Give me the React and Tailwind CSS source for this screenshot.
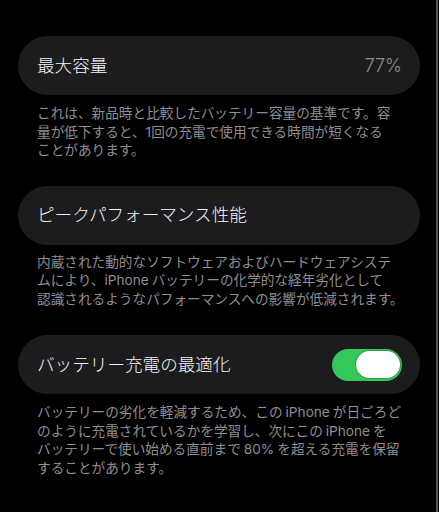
import React, { useState } from "react";

const font = { fontFamily: 'Inter, "Noto Sans CJK JP", sans-serif' };

const Row = ({ title, right }) => (
  <div className="h-[59px] rounded-full bg-[#1c1c1e] flex items-center justify-between pl-[19px] pr-[18px]">
    <span className="text-[17.6px] font-light text-[#f4f4f4] leading-none">{title}</span>
    {right}
  </div>
);

const Desc = ({ lines, className = "" }) => (
  <div className={`pl-[19px] text-[13.65px] leading-[18.5px] text-[#8e8e93] ${className}`}>
    {lines.map((l, i) => (
      <div key={i} className="whitespace-nowrap">
        {l}
      </div>
    ))}
  </div>
);

const IP = ({ l = true, r = true }) => (
  <span className={`${l ? "ml-[3px]" : ""} ${r ? "mr-[3px]" : ""}`}>iPhone</span>
);

export default function App() {
  const [on, setOn] = useState(true);

  return (
    <div className="w-[439px] h-[512px] bg-black flex overflow-hidden" style={font}>
      <div className="flex-1 pt-[36px] pl-[18px] pr-[16px]">
        <Row
          title="最大容量"
          right={<span className="text-[18px] font-light text-[#8e8e93] leading-none">77%</span>}
        />
        <Desc
          className="mt-[9px]"
          lines={[
            "これは、新品時と比較したバッテリー容量の基準です。容",
            "量が低下すると、1回の充電で使用できる時間が短くなる",
            "ことがあります。",
          ]}
        />

        <div className="mt-[26px]">
          <Row title="ピークパフォーマンス性能" />
        </div>
        <Desc
          className="mt-[8px]"
          lines={[
            "内蔵された動的なソフトウェアおよびハードウェアシステ",
            <>
              ムにより、
              <IP l={false} />
              バッテリーの化学的な経年劣化として
            </>,
            "認識されるようなパフォーマンスへの影響が低減されます。",
          ]}
        />

        <div className="mt-[27px]">
          <Row
            title="バッテリー充電の最適化"
            right={
              <button
                onClick={() => setOn(!on)}
                className={`w-[70px] h-[32px] rounded-full flex items-center px-[2px] ${
                  on ? "bg-[#34c759] justify-end" : "bg-[#39393d] justify-start"
                }`}
              >
                <span className="w-[44px] h-[27px] rounded-full bg-white shadow-[0_0_0_1px_rgba(40,120,60,0.5)]" />
              </button>
            }
          />
        </div>
        <Desc
          className="mt-[9px]"
          lines={[
            <>
              バッテリーの劣化を軽減するため、この
              <IP />
              が日ごろど
            </>,
            <>
              のように充電されているかを学習し、次にこの
              <IP />を
            </>,
            <>
              バッテリーで使い始める直前まで<span className="mx-[3px]">80%</span>を超える充電を保留
            </>,
            "することがあります。",
          ]}
        />
      </div>
      <div className="w-[2px] bg-[#55555a]" />
      <div className="w-px" />
    </div>
  );
}
